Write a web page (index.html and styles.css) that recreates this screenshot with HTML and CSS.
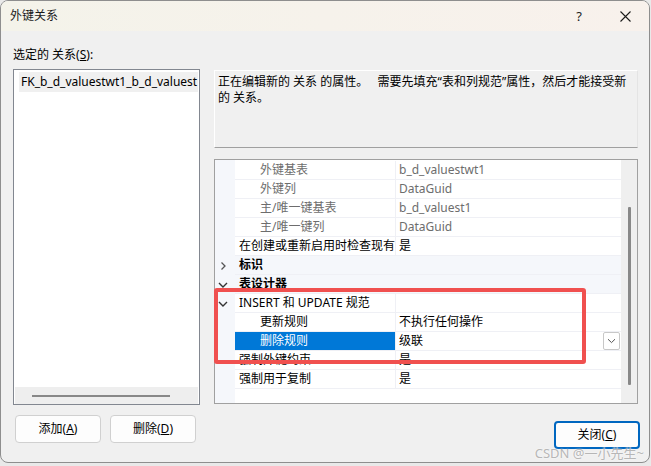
FILE: index.html
```html
<!DOCTYPE html>
<html lang="zh-CN">
<head>
<meta charset="utf-8">
<title>外键关系</title>
<link rel="stylesheet" href="styles.css">
</head>
<body>
<div class="window">
  <div class="titlebar">
    <span class="title">外键关系</span>
    <span class="cap help">?</span>
    <span class="cap close">
      <svg width="11" height="11" viewBox="0 0 11 11"><path d="M0.5 0.5 L10.5 10.5 M10.5 0.5 L0.5 10.5" stroke="#1b1b1b" stroke-width="1.1" fill="none"/></svg>
    </span>
  </div>
  <div class="body">
    <div class="label">选定的 关系(<u>S</u>):</div>
    <div class="main">
      <div class="listbox">
        <div class="list-item">FK_b_d_valuestwt1_b_d_valuest</div>
        <div class="list-fill"></div>
        <div class="hscroll"><div class="hthumb"></div></div>
      </div>
      <div class="right">
        <div class="desc">正在编辑新的 关系 的属性。&nbsp;&nbsp; 需要先填充“表和列规范”属性，然后才能接受新的 关系。</div>
        <div class="grid">
          <div class="rows">
            <div class="row ro"><div class="tog"></div><div class="name sub">外键基表</div><div class="val">b_d_valuestwt1</div></div>
            <div class="row ro"><div class="tog"></div><div class="name sub">外键列</div><div class="val">DataGuid</div></div>
            <div class="row ro"><div class="tog"></div><div class="name sub">主/唯一键基表</div><div class="val">b_d_valuest1</div></div>
            <div class="row ro"><div class="tog"></div><div class="name sub">主/唯一键列</div><div class="val">DataGuid</div></div>
            <div class="row"><div class="tog"></div><div class="name">在创建或重新启用时检查现有</div><div class="val">是</div></div>
            <div class="row cat"><div class="tog"><svg width="10" height="10" viewBox="0 0 10 10"><path d="M3.5 1.5 L7 5 L3.5 8.5" stroke="#555" stroke-width="1.3" fill="none"/></svg></div><div class="catname">标识</div></div>
            <div class="row cat"><div class="tog"><svg width="10" height="10" viewBox="0 0 10 10"><path d="M1 3 L5 7 L9 3" stroke="#333" stroke-width="1.4" fill="none"/></svg></div><div class="catname">表设计器</div></div>
            <div class="row"><div class="tog"><svg width="10" height="10" viewBox="0 0 10 10"><path d="M1 3 L5 7 L9 3" stroke="#333" stroke-width="1.4" fill="none"/></svg></div><div class="name">INSERT 和 UPDATE 规范</div><div class="val"></div></div>
            <div class="row"><div class="tog"></div><div class="name sub">更新规则</div><div class="val">不执行任何操作</div></div>
            <div class="row"><div class="tog"></div><div class="name sub selected">删除规则</div><div class="val">级联<span class="dropbtn"><svg width="9" height="6" viewBox="0 0 9 6"><path d="M1 1.2 L4.5 4.6 L8 1.2" stroke="#555" stroke-width="1" fill="none"/></svg></span></div></div>
            <div class="row"><div class="tog"></div><div class="name">强制外键约束</div><div class="val">是</div></div>
            <div class="row"><div class="tog"></div><div class="name">强制用于复制</div><div class="val">是</div></div>
          </div>
          <div class="vscroll"><div class="vthumb"></div></div>
          <div class="mark"></div>
        </div>
      </div>
    </div>
    <div class="buttons">
      <div class="btn first">添加(<u>A</u>)</div>
      <div class="btn second">删除(<u>D</u>)</div>
      <div class="btn default">关闭(<u>C</u>)</div>
    </div>
  </div>
  <div class="watermark">CSDN @一小先生~</div>
</div>
</body>
</html>
```

FILE: styles.css
```css
* { box-sizing: border-box; }

html, body {
  margin: 0;
  padding: 0;
  background: #e9e9e9;
}

body {
  width: 651px;
  height: 466px;
  overflow: hidden;
  font-family: "Noto Sans", "Noto Sans CJK SC", sans-serif;
  font-size: 12px;
  color: #000;
}

.window {
  position: relative;
  width: 650px;
  height: 463px;
  border: 1px solid #8e8e8e;
  border-radius: 8px;
  background: #f0f0f0;
  overflow: hidden;
  display: flex;
  flex-direction: column;
}

.titlebar {
  height: 30px;
  flex: none;
  display: flex;
  align-items: center;
  padding-left: 9px;
  background: linear-gradient(90deg, #f4f3ea, #f8f1ec);
}

.title {
  flex: 1;
  line-height: 16px;
  color: #1a1a1a;
}

.cap {
  width: 46px;
  height: 30px;
  display: flex;
  align-items: center;
  justify-content: center;
  color: #1b1b1b;
}

.help {
  font-size: 13px;
}

.close {
  margin-right: 1px;
}

.body {
  flex: 1;
  padding: 16px 9px 0 12px;
  display: flex;
  flex-direction: column;
}

.label {
  height: 16px;
  line-height: 16px;
}

.main {
  display: flex;
  margin-top: 6px;
  gap: 14px;
}

.listbox {
  width: 187px;
  height: 336px;
  border: 1px solid #828790;
  background: #fff;
  display: flex;
  flex-direction: column;
}

.list-item {
  height: 20px;
  line-height: 20px;
  margin: 2px 1px 0 5px;
  padding-left: 2px;
  background: #f0f0f0;
  white-space: nowrap;
}

.list-fill { flex: 1; }

.hscroll {
  height: 17px;
  margin: 0 1px;
  background: #eeeeee;
  display: flex;
  align-items: center;
  padding-left: 17px;
}

.hthumb {
  width: 138px;
  height: 2px;
  background: #888;
}

.right {
  width: 424px;
  margin-top: 1px;
  display: flex;
  flex-direction: column;
}

.desc {
  height: 78px;
  border: 1px solid;
  border-color: #ffffff #e4e4e4 #a0a0a0 #ffffff;
  padding: 3px 3px;
  line-height: 16px;
  background: #f0f0f0;
}

.grid {
  position: relative;
  margin-top: 11px;
  height: 245px;
  border: 1px solid #a0a0a0;
  display: flex;
  background: #fff;
}

.rows {
  flex: 1;
  padding-top: 1px;
  background: linear-gradient(90deg, #f5f7fb 20px, #ffffff 20px);
}

.row {
  display: flex;
  height: 19px;
  line-height: 18px;
}

.tog {
  width: 20px;
  flex: none;
  display: flex;
  align-items: center;
  padding-left: 3px;
}

.name {
  width: 161px;
  flex: none;
  padding-left: 4px;
  border-right: 1px solid #eff0f5;
  border-bottom: 1px solid #eff0f5;
  white-space: nowrap;
  overflow: hidden;
}

.name.sub { padding-left: 25px; }

.val {
  flex: 1;
  display: flex;
  padding-left: 3px;
  border-bottom: 1px solid #eff0f5;
  white-space: nowrap;
}

.ro .name, .ro .val { color: #6d6d6d; }

.selected {
  background: #0078d7;
  color: #fff;
}

.cat { background: #f5f7fb; }

.catname {
  flex: 1;
  font-weight: bold;
  padding-left: 4px;
  border-bottom: 1px solid #eff0f5;
}

.dropbtn {
  margin-left: auto;
  margin-right: 1px;
  width: 17px;
  height: 18px;
  border: 1px solid #c8c8c8;
  border-radius: 2px;
  background: #fff;
  display: flex;
  align-items: center;
  justify-content: center;
}

.vscroll {
  width: 16px;
  flex: none;
  background: #efefef;
  padding: 47px 0 0 7px;
}

.vthumb {
  width: 3px;
  height: 178px;
  background: #888;
  border-radius: 1px;
}

.mark {
  position: absolute;
  left: -1px;
  top: 128px;
  width: 372px;
  height: 76px;
  border: 4px solid #f0504f;
  border-radius: 3px;
}

.buttons {
  display: flex;
  align-items: flex-start;
  margin-top: 10px;
}

.btn {
  width: 86px;
  height: 28px;
  border: 1px solid #d0d0d0;
  border-radius: 4px;
  background: #fdfdfd;
  display: flex;
  align-items: center;
  justify-content: center;
  line-height: 16px;
}

.btn.first { margin-left: 2px; }
.btn.second { margin-left: 9px; }

.btn.default {
  margin-left: auto;
  margin-top: 6px;
  border: 2px solid #0067c0;
  border-radius: 4px;
}

.watermark {
  position: absolute;
  right: 5px;
  bottom: 1px;
  line-height: 16px;
  font-size: 13px;
  color: rgba(165, 165, 165, 0.8);
  text-shadow: 0 0 2px #fff;
}
```
